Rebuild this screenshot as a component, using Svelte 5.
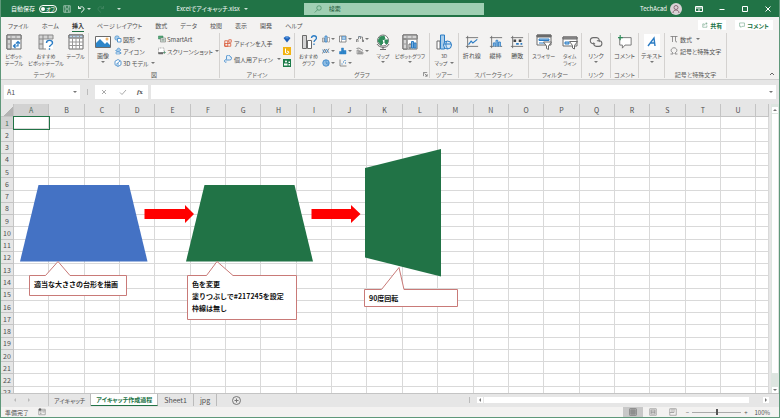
<script lang="ts">
    const menu = ["ファイル", "ホーム", "挿入", "ページ レイアウト", "数式", "データ", "校閲", "表示", "開発", "ヘルプ"];
    const columns = "ABCDEFGHIJKLMNOPQRSTU".split("");
    const rows = Array.from({ length: 23 }, (_, i) => i + 1);
    const sheets = ["アイキャッチ", "アイキャッチ作成過程", "Sheet1", "jpg"];
    const chartIcons = ["column", "tree", "waterfall", "line", "histogram", "combo", "pie", "scatter"];

    let activeMenu = $state("挿入");
    let activeSheet = $state("アイキャッチ作成過程");
    let autosave = $state(false);
    let zoom = $state(100);
</script>

{#snippet icon(name: string)}
    <svg class="icon" viewBox="0 0 16 16" fill="none" stroke="#6b6b6b" stroke-width="1" aria-hidden="true">
        {#if name == "pivot"}
            <path d="M1 1h14v14H1z" fill="#fff" /><path d="M1 1h14v4H1zM1 5h4v10H1z" fill="#d4d4d4" />
            <path d="M5 1v14M1 5h14M1 10h4M10 1v4" stroke="#999" />
            <path d="M7.500 12h4.500V7.500M9.500 10l-2 2 2 2M10 9.500l2-2 2 2" stroke="#2b7cc4" stroke-width="1.200" />
        {:else if name == "pivotHelp"}
            <path d="M1 1h14v14H1z" fill="#fff" stroke="none" /><path d="M1 1h14v4H1zM1 5h4v10H1z" fill="#d4d4d4" stroke="none" />
            <path d="M8 15H1V1h14v4M5 1v14M1 5h14M1 10h4M10 1v4" stroke="#888" />
            <path d="M8.500 9c0-3.500 6-3.500 6 0 0 2-3 2-3 4M11.500 14.300v1.500" stroke="#2b7cc4" stroke-width="1.400" />
        {:else if name == "table"}
            <path d="M1 1h14v14H1z" fill="#fff" /><path d="M1 1h14v3H1z" fill="#b9d5ec" />
            <path d="M1 4h14M1 8h14M1 11.500h14M4.500 1v14M8 1v14M11.500 1v14" stroke="#999" />
        {:else if name == "picture"}
            <path d="M.5 2.500h15v11H.5z" fill="#fff" />
            <path d="M1 9l4-4 5 5 2-2 3 3v2H1z" fill="#2e86c9" stroke="none" /><circle cx="12" cy="5" r="1.500" fill="#f0b46b" stroke="none" />
        {:else if name == "shapes"}
            <circle cx="6" cy="6" r="4.500" fill="#a9cdea" stroke="#2b7cc4" /><path d="M7 7h7v7H7z" fill="#fff" stroke="#2b7cc4" stroke-width="1.500" />
        {:else if name == "icons"}
            <path d="M6 6c0-5 6-5 6-1l2 1-2 1c0 3-6 3-9 0z" fill="#a9cdea" stroke="#2b7cc4" />
            <path d="M4 10h8v4H4zM12 11h2v2h-2" stroke="#2b7cc4" fill="#d7e8f6" />
        {:else if name == "model"}
            <path d="M8 1l6 3.500v7L8 15l-6-3.500v-7z" fill="#fff" stroke="#2b7cc4" stroke-width="1.500" /><path d="M4 11l8-7M8 8v6" stroke="#2b7cc4" stroke-width="1.500" />
        {:else if name == "smart"}
            <path d="M1 2h9v6H1z" fill="#56a979" stroke="#2f7d52" /><path d="M5 6h10v8H5z" fill="#d8eadf" /><path d="M7 9h6M7 11.500h6" />
        {:else if name == "screenshot"}
            <path d="M1 2h11v9H1z" fill="#fff" stroke-dasharray="2 1" /><path d="M1 11h9v3H1z" fill="#6b6b6b" /><path d="M13 8v6M10 11h6" stroke="#2f7d52" />
        {:else if name == "store"}
            <path d="M1.500 3.500h6v11h-6zM1.500 9h12v5.500h-12zM9.500 1.500h5v5h-5z" stroke="#d8502e" stroke-width="1.500" />
        {:else if name == "addin"}
            <path d="M5 9V4a3.500 3.500 0 017-1 3.500 3.500 0 01-1 7H5a2.500 2.500 0 100 4" fill="#e4eff9" stroke="#2b7cc4" stroke-width="1.500" />
        {:else if name == "visio"}
            <path d="M1 6l4-3h6l4 3-7 9z" fill="#1e5fb8" stroke="none" /><path d="M5 3h6v4H5z" fill="#4f95df" stroke="none" />
        {:else if name == "bing"}
            <path d="M0 0h16v16H0z" fill="#f2b312" stroke="none" /><path d="M5 3v9l5 1 2-3-4-2" stroke="#fff" stroke-width="2" />
        {:else if name == "people"}
            <path d="M0 0h16v16H0z" fill="#1c7b48" stroke="none" /><circle cx="6" cy="5" r="2" fill="#fff" stroke="none" /><path d="M2 9h7v4H2zM11 5h3v3h-3zM11 10h3v3h-3z" fill="#fff" stroke="none" />
        {:else if name == "chartHelp"}
            <path d="M1.500 1.500h4v13h-4z" fill="#d4d4d4" /><path d="M6.500 6.500h4v8h-4z" fill="#fff" />
            <path d="M10.500 4c0-3 5-3 5 0 0 2-2.500 2-2.500 4M13 9.500v1.500" stroke="#2b7cc4" stroke-width="1.300" />
        {:else if name == "column"}
            <path d="M1 6h4v8H1z" fill="#d4d4d4" /><path d="M6 2h4v12H6z" fill="#a9cdea" stroke="#2b7cc4" stroke-width="1.500" /><path d="M11 5h4v9h-4z" fill="#fff" />
        {:else if name == "tree"}
            <path d="M1 2h13v12H1z" fill="#fff" stroke-width="1.500" /><path d="M6 3h7v6H6z" fill="#a9cdea" stroke="#2b7cc4" /><path d="M5 2v12" />
        {:else if name == "waterfall"}
            <path d="M1 14V9h3v5M5 8V3h4v5M10 4h3v10M13 10h2v4" stroke-width="1.500" /><path d="M6 5l3-3" stroke="#2b7cc4" />
        {:else if name == "line"}
            <path d="M1 13l4-9 4 8 5-9" stroke-width="1.500" /><path d="M1 5l4 7 4-8 5 8" stroke="#2b7cc4" stroke-width="1.300" />
        {:else if name == "histogram"}
            <path d="M1 9h4v5H1zM5 2h4v12H5zM9 7h5v7H9z" fill="#2e86c9" stroke="#2b7cc4" />
        {:else if name == "combo"}
            <path d="M2 6h4v8H2zM6 8h4v6H6zM10 10h4v4h-4z" fill="#d4d4d4" /><path d="M1 3l5-1 8 5" stroke-width="1.500" />
        {:else if name == "pie"}
            <circle cx="8" cy="8" r="6.500" fill="#8fbde3" stroke="#2b7cc4" stroke-width="1.500" /><path d="M8 2v6l5 4M8 8h6" stroke="#2b7cc4" />
        {:else if name == "scatter"}
            <path d="M2 1v13h13" stroke-width="1.500" /><path d="M5 10h2M8 6h2M12 8h2M11 3h2" stroke="#2b7cc4" stroke-width="2" />
        {:else if name == "globe"}
            <circle cx="8" cy="6.500" r="5.500" fill="#fff" stroke="#777" /><path d="M5 3l4-1 1 3-3 1 1 3-2 2-3-4zM10 6h3l-1 4-2-1z" fill="#2f8c5a" stroke="#2f8c5a" />
            <path d="M2 10c2 4 10 5 12 0M8 13v2M5 15.500h6" />
        {:else if name == "pivotChart"}
            <path d="M1 1h14v14H1z" fill="#fff" /><path d="M1 1h14v4H1zM1 5h4v10H1z" fill="#d4d4d4" /><path d="M5 1v14M1 5h14M10 1v4M1 10h4" stroke="#999" />
            <path d="M7 10h2v4H7z" fill="#fff" /><path d="M9.500 7.500h2V14h-2zM12 9h2v5h-2z" fill="#7fb3e0" stroke="#2b7cc4" />
        {:else if name == "map3d"}
            <path d="M1 7h3v8H1z" fill="#fff" /><path d="M4.500 1h4v14h-4z" fill="#a9cdea" stroke="#2b7cc4" />
            <circle cx="11.500" cy="11" r="4" fill="#d7e8f6" stroke="#2b7cc4" /><path d="M8 10h7M11 7c-2 3-1 6 1 8" stroke="#2b7cc4" />
        {:else if name == "sparkLine"}
            <path d="M3 1v14M1 3h14M1 13h14" /><path d="M4 11l3-4 2 2 5-4" stroke="#2b7cc4" stroke-width="1.300" />
        {:else if name == "sparkColumn"}
            <path d="M3 1v14M1 3h14M1 13h14" /><path d="M5 13V9h2v4M8 13V6h2v7M11 13V8h2v5" fill="#a9cdea" stroke="#2b7cc4" />
        {:else if name == "sparkWin"}
            <path d="M3 1v14M1 3h14M1 13h14" /><path d="M4 5h3v3H4zM10 5h3v3h-3z" fill="#444" stroke="none" /><path d="M7 9h3v2H7zM12 9h2v2h-2z" fill="#2b7cc4" stroke="none" />
        {:else if name == "slicer"}
            <path d="M1 1h14v10H1z" fill="#fff" /><path d="M1 1h14v2H1z" fill="#6b6b6b" /><path d="M3 5h10v1.500H3z" fill="#a9cdea" stroke="#2b7cc4" /><path d="M3 9h5" stroke="#2b7cc4" />
            <path d="M7.500 8h8L12.500 12v3.500l-2-1V12z" fill="#fff" />
        {:else if name == "timeline"}
            <path d="M1 3h14v9H1z" fill="#fff" /><path d="M1 3h14v2H1z" fill="#9a9a9a" /><path d="M3 8h4v2H3z" fill="#a9cdea" stroke="#2b7cc4" />
            <path d="M7.500 7.500h8l-3 4V15l-2-1v-2.500z" fill="#fff" />
        {:else if name == "link"}
            <path d="M7 10H5a3.500 3.500 0 010-7h3.500a3.500 3.500 0 013 5M9 6.500h2.500a3.200 3.200 0 010 6.500H8.500a3.300 3.300 0 01-3-4.500" stroke-width="1.200" />
        {:else if name == "comment"}
            <path d="M2 3h13v8.500H8L5 15v-3.500H2z" fill="#fff" /><path d="M2.500 0v6M0 3h5.500" stroke="#2f8c5a" stroke-width="1.300" />
        {:else if name == "textbox"}
            <path d="M0 0h16v16H0z" fill="#fff" stroke="none" /><path d="M4 12l6-8 1 8M6 9h5" stroke="#2b7cc4" stroke-width="1.400" />
        {:else if name == "share"}
            <path d="M6 5H2v9h11V9M5 10c0-4 3-6 8-6M10 1l4 3-4 3" stroke="#217346" />
        {:else if name == "bubble"}
            <path d="M1.500 2.500h13v9H8l-3 3v-3H1.500z" stroke="#217346" />
        {:else if name == "save"}
            <path d="M1.500 1.500h13v13h-13zM4.500 1.500v5h7v-5M4.500 14.500v-5h7v5" stroke="#fff" />
        {:else if name == "undo"}
            <path d="M3 2v5h5M3 7c6-6 11-3 11 1 0 3-3 4-6 7" stroke="#fff" stroke-width="1.800" />
        {:else if name == "redo"}
            <path d="M13 2v5H8M13 7c-6-6-11-3-11 1 0 3 3 4 6 7" stroke="#3f8560" stroke-width="1.800" />
        {:else if name == "search"}
            <circle cx="10" cy="6" r="4.500" stroke="#217346" /><path d="M7 9.500L1.500 15" stroke="#217346" />
        {:else if name == "pi"}
            <path d="M1 3h14M5 3v11M11 3v9q0 2 3 2" stroke-width="1.400" />
        {:else if name == "omega"}
            <path d="M1 14h5v-2C-1 8 3 1.500 8 1.500S17 8 10 12v2h5" stroke-width="1.400" />
        {:else if name == "record"}
            <path d="M1.500 2.500h13v11h-13zM1.500 5.500h13M4 8h3M9 8h4M4 11h3" /><circle cx="4" cy="3" r="2" fill="#555" />
        {:else if name == "viewGrid"}
            <path d="M1.500 1.500h13v13h-13zM1.500 6h13M1.500 10h13M6 1.500v13M10 1.500v13" stroke="#444" />
        {:else if name == "viewPage"}
            <path d="M1.500 1.500h13v13h-13zM4 4h8v8H4zM4 6.500h8M4 9h8" />
        {:else if name == "viewBreak"}
            <path d="M1.500 1.500h13v13h-13zM1.500 9H6V1.500M10 1.500V9H6" />
        {/if}
    </svg>
{/snippet}

{#snippet big(name: string, lines: string[], drop: boolean)}
    <button class="big">
        {@render icon(name)}
        {#each lines as line, i}
            <span>{line}{#if drop && i == 1}<i class="caret inline"></i>{/if}</span>
        {/each}
        {#if drop && lines.length == 1}<i class="caret"></i>{/if}
    </button>
{/snippet}

{#snippet small(name: string, label: string, drop: boolean)}
    <button class="small">
        {@render icon(name)}
        <span>{label}</span>
        {#if drop}<i class="caret"></i>{/if}
    </button>
{/snippet}

<div class="window">
    <header class="titlebar">
        <div class="quick">
            <label class="autosave">自動保存 <input type="checkbox" bind:checked={autosave} /><span class="toggle">オフ</span></label>
            <button aria-label="上書き保存">{@render icon("save")}</button>
            <button aria-label="元に戻す">{@render icon("undo")}<i class="caret light"></i></button>
            <button aria-label="やり直し">{@render icon("redo")}</button>
            <button class="more" aria-label="カスタマイズ"><i class="caret light"></i></button>
            <span class="filename">Excelでアイキャッチ.xlsx <i class="caret light"></i></span>
        </div>
        <label class="search">{@render icon("search")}<input type="search" placeholder="検索" aria-label="検索" /></label>
        <div class="account">
            <span class="user">TechAcad</span>
            <svg class="avatar" viewBox="0 0 12 12" aria-hidden="true">
                <circle cx="6" cy="6" r="6" fill="#d9d2d6" /><circle cx="6" cy="4.500" r="2" fill="none" stroke="#8a6b78" /><path d="M3 10c0-4 6-4 6 0" fill="none" stroke="#8a6b78" />
            </svg>
            <button aria-label="リボンの表示オプション"><svg viewBox="0 0 8 8"><path d="M.5 1.500h7v5h-7zM.5 3h7M4 6V4" /></svg></button>
            <button aria-label="最小化"><svg viewBox="0 0 8 8"><path d="M1.500 4.500h5" /></svg></button>
            <button aria-label="最大化"><svg viewBox="0 0 8 8"><path d="M1.500 1.500h5v5h-5z" /></svg></button>
            <button aria-label="閉じる"><svg viewBox="0 0 8 8"><path d="M1.500 1.500l5 5M6.500 1.500l-5 5" /></svg></button>
        </div>
    </header>

    <nav class="menu">
        {#each menu as item}
            <button class:active={item == activeMenu} onclick={() => (activeMenu = item)}>{item}</button>
        {/each}
        <div class="actions">
            <button>{@render icon("share")}共有</button>
            <button>{@render icon("bubble")}コメント</button>
        </div>
    </nav>

    <div class="ribbon">
        <section class="g-table">
            <div class="tools">
                {@render big("pivot", ["ピボット", "テーブル"], false)}
                {@render big("pivotHelp", ["おすすめ", "ピボットテーブル"], false)}
                {@render big("table", ["テーブル"], false)}
            </div>
            <h2>テーブル</h2>
        </section>
        <section class="g-figure">
            <div class="tools">
                {@render big("picture", ["画像"], true)}
                <div class="stack">
                    {@render small("shapes", "図形", true)}
                    {@render small("icons", "アイコン", false)}
                    {@render small("model", "3D モデル", true)}
                </div>
                <div class="stack">
                    {@render small("smart", "SmartArt", false)}
                    {@render small("screenshot", "スクリーンショット", true)}
                </div>
            </div>
            <h2>図</h2>
        </section>
        <section class="g-addin">
            <div class="tools">
                <div class="stack tall">
                    {@render small("store", "アドインを入手", false)}
                    {@render small("addin", "個人用アドイン", true)}
                </div>
                <div class="stack">
                    {#each ["visio", "bing", "people"] as name}
                        <button class="small" aria-label={name}>{@render icon(name)}</button>
                    {/each}
                </div>
            </div>
            <h2>アドイン</h2>
        </section>
        <section class="g-chart">
            <div class="tools">
                {@render big("chartHelp", ["おすすめ", "グラフ"], false)}
                <div class="charts">
                    {#each chartIcons as name}
                        <button class="small" aria-label={name}>{@render icon(name)}<i class="caret"></i></button>
                    {/each}
                </div>
                {@render big("globe", ["マップ"], true)}
                {@render big("pivotChart", ["ピボットグラフ"], true)}
            </div>
            <h2>グラフ</h2>
            <svg class="launcher" viewBox="0 0 6 6" aria-hidden="true"><path d="M.5 5V.5H5M2 2l3 3M5 2.500V5H2.500" fill="none" stroke="#777" /></svg>
        </section>
        <section class="g-tour">
            <div class="tools">{@render big("map3d", ["3D", "マップ"], true)}</div>
            <h2>ツアー</h2>
        </section>
        <section class="g-spark">
            <div class="tools">
                {@render big("sparkLine", ["折れ線"], false)}
                {@render big("sparkColumn", ["縦棒"], false)}
                {@render big("sparkWin", ["勝敗"], false)}
            </div>
            <h2>スパークライン</h2>
        </section>
        <section class="g-filter">
            <div class="tools">
                {@render big("slicer", ["スライサー"], false)}
                {@render big("timeline", ["タイム", "ライン"], false)}
            </div>
            <h2>フィルター</h2>
        </section>
        <section class="g-link">
            <div class="tools">{@render big("link", ["リンク"], true)}</div>
            <h2>リンク</h2>
        </section>
        <section class="g-comment">
            <div class="tools">{@render big("comment", ["コメント"], false)}</div>
            <h2>コメント</h2>
        </section>
        <section class="g-text">
            <div class="tools">{@render big("textbox", ["テキスト"], true)}</div>
        </section>
        <section class="g-symbol">
            <div class="tools">
                <div class="stack">
                    {@render small("pi", "数式", true)}
                    {@render small("omega", "記号と特殊文字", false)}
                </div>
            </div>
            <h2>記号と特殊文字</h2>
        </section>
        <button class="collapse" aria-label="リボンを折りたたむ"><svg viewBox="0 0 6 6"><path d="M1 4l2-2 2 2" /></svg></button>
    </div>

    <div class="formula">
        <label class="namebox"><input value="A1" aria-label="名前ボックス" /><i class="caret"></i></label>
        <span class="grip"></span>
        <div class="fx">
            <button aria-label="キャンセル"><svg viewBox="0 0 8 8"><path d="M2 2l4 4M6 2L2 6" /></svg></button>
            <button aria-label="入力"><svg viewBox="0 0 8 8"><path d="M1 4.500l2 2L7 2" /></svg></button>
            <button class="fn"><em>f</em>x</button>
        </div>
        <label class="entry"><input aria-label="数式バー" /><i class="caret"></i></label>
    </div>

    <div class="work">
        <main class="sheet">
            <table>
                <thead>
                    <tr>
                        <th class="corner" aria-label="すべて選択"></th>
                        {#each columns as col}<th class:current={col == "A"}>{col}</th>{/each}
                        <th></th>
                    </tr>
                </thead>
                <tbody>
                    {#each rows as row}
                        <tr>
                            <th class:current={row == 1}>{row}</th>
                            {#each columns as col}<td class:selected={row == 1 && col == "A"}></td>{/each}
                            <td></td>
                        </tr>
                    {/each}
                </tbody>
            </table>

            <!-- drawing layer, in sheet coordinates -->
            <svg class="drawing" viewBox="0 0 470 230" aria-hidden="true">
                <path d="M36.500 81h90.500l18.500 76.500H18z" fill="#4472c4" />
                <path d="M202.500 81h90l18.500 76.500H184z" fill="#217346" />
                <path d="M363 64l76-19v127.500l-76-19z" fill="#217346" />
                <path d="M142.500 105H183v-4l9 9-9 9v-4h-40.500zM309.500 105H349v-4l9.500 9-9.500 9v-4h-39.500z" fill="#f00" />
                <g fill="#fff" stroke="#c97a78">
                    <path d="M27.500 171.500h16l12.500-14 12 14h56.500v20h-97z" />
                    <path d="M185.500 171.500h19l10.500-14 16 14h63.500v44h-109z" />
                    <path d="M362.500 185.500h17l17.500-22 5 22h53.500v17h-93z" />
                </g>
            </svg>
            <p class="note first">適当な大きさの台形を描画</p>
            <p class="note second">色を変更<br />塗りつぶしで#217245を設定<br />枠線は無し</p>
            <p class="note third">90度回転</p>
        </main>
        <div class="vscroll">
            <button aria-label="上へ"><i class="caret up"></i></button>
            <span class="thumb"></span>
            <button aria-label="下へ"><i class="caret"></i></button>
        </div>
    </div>

    <div class="tabs">
        <span class="arrows"><i class="caret left"></i><i class="caret right"></i></span>
        {#each sheets as name}
            <button
                class="tab"
                class:latin={/^\w+$/.test(name)}
                class:active={name == activeSheet}
                onclick={() => (activeSheet = name)}
            >{name}</button>
        {/each}
        <button class="add" aria-label="新しいシート"><svg viewBox="0 0 9 9"><circle cx="4.500" cy="4.500" r="4" /><path d="M4.500 2.500v4M2.500 4.500h4" /></svg></button>
        <span class="grip"></span>
        <div class="hscroll">
            <button aria-label="左へ"><i class="caret left"></i></button>
            <span class="thumb"></span>
            <button aria-label="右へ"><i class="caret right"></i></button>
        </div>
    </div>

    <footer class="status">
        <span>準備完了</span>
        {@render icon("record")}
        <div class="views">
            <button class="on" aria-label="標準">{@render icon("viewGrid")}</button>
            <button aria-label="ページ レイアウト">{@render icon("viewPage")}</button>
            <button aria-label="改ページ プレビュー">{@render icon("viewBreak")}</button>
        </div>
        <button aria-label="縮小" onclick={() => (zoom -= 10)}>−</button>
        <input type="range" min="10" max="190" bind:value={zoom} aria-label="ズーム" />
        <button aria-label="拡大" onclick={() => (zoom += 10)}>+</button>
        <span class="percent">{zoom}%</span>
    </footer>
</div>

<style>
    :global(body) {
        margin: 0;
    }

    .window {
        box-sizing: border-box;
        height: 100vh;
        display: flex;
        flex-direction: column;
        overflow: hidden;
        border: 1px solid #5f987a;
        border-top: 0;
        background: #e6e6e6;
        color: #505050;
        font: 6px/7px "Noto Sans CJK JP", sans-serif;
        font-feature-settings: "palt";
    }

    button,
    input {
        font: inherit;
        font-feature-settings: inherit;
        color: inherit;
        background: none;
        border: 0;
        padding: 0;
        margin: 0;
        min-width: 0;
        outline: 0;
    }

    button {
        display: flex;
        align-items: center;
        justify-content: center;
        white-space: nowrap;
    }

    svg {
        flex: none;
    }

    .icon {
        width: 8px;
        height: 8px;
    }

    .caret {
        flex: none;
        width: 0;
        height: 0;
        border: 2px solid transparent;
        border-top-color: #777;
        border-bottom: 0;
    }

    .caret.light {
        border-top-color: #cfe3d7;
    }

    .caret.up {
        transform: rotate(180deg);
    }

    .caret.left {
        transform: rotate(90deg);
    }

    .caret.right {
        transform: rotate(-90deg);
    }

    /* title bar */
    .titlebar {
        flex: none;
        height: 17px;
        display: grid;
        grid-template-columns: 303fr 180fr 295fr;
        align-items: center;
        background: #217346;
        color: #fff;
        margin: 0 -1px;
    }

    .quick {
        display: flex;
        align-items: center;
        gap: 6px;
        padding-left: 11px;
    }

    .quick button {
        gap: 2px;
    }

    .quick .more {
        margin-left: 6px;
    }

    .autosave {
        display: flex;
        align-items: center;
        gap: 4px;
    }

    .autosave input {
        position: absolute;
        opacity: 0;
    }

    .toggle {
        box-sizing: border-box;
        width: 18px;
        height: 8px;
        border: 1px solid #fff;
        border-radius: 4px;
        font-size: 5px;
        line-height: 6px;
        display: flex;
        align-items: center;
        gap: 1px;
    }

    .toggle::before {
        content: "";
        width: 4px;
        height: 4px;
        margin-left: 1px;
        border-radius: 50%;
        background: #fff;
    }

    .filename {
        margin-left: auto;
        margin-right: 56px;
        display: flex;
        align-items: center;
        gap: 4px;
        white-space: nowrap;
    }

    .search {
        height: 12px;
        background: #9fcfb3;
        display: flex;
        align-items: center;
        gap: 7px;
        padding-left: 10px;
        color: #1c5837;
    }

    .search input {
        flex: 1;
    }

    .search input::placeholder {
        color: #1c5837;
        opacity: 1;
    }

    .account {
        display: flex;
        align-items: center;
        justify-content: flex-end;
        padding-right: 1px;
    }

    .account button {
        width: 23px;
    }

    .account button svg {
        width: 8px;
        height: 8px;
        fill: none;
        stroke: #fff;
    }

    .avatar {
        width: 12px;
        height: 12px;
        margin: 0 5px 0 3px;
    }

    /* menu */
    .menu {
        flex: none;
        height: 16px;
        display: flex;
        align-items: center;
        gap: 13px;
        padding: 0 6px 0 7px;
        background: #f3f2f1;
    }

    .menu > button {
        height: 13px;
        box-sizing: border-box;
        border: 1px solid transparent;
        border-width: 1px 0;
    }

    .menu > button.active {
        font-weight: bold;
        color: #333;
        border-bottom-color: #217346;
    }

    .actions {
        margin-left: auto;
        display: flex;
        gap: 9px;
        font-weight: bold;
        color: #217346;
    }

    .actions button {
        height: 10px;
        padding: 0 4px;
        gap: 2px;
        background: #fff;
    }

    .actions .icon {
        width: 6px;
        height: 6px;
    }

    /* ribbon */
    .ribbon {
        flex: none;
        height: 46px;
        display: flex;
        background: #f3f2f1;
        border-bottom: 1px solid #cfcfcf;
    }

    section {
        box-sizing: border-box;
        flex: none;
        height: 45px;
        display: flex;
        flex-direction: column;
        justify-content: space-between;
        border-right: 1px solid #d4d2d0;
        position: relative;
    }

    h2 {
        margin: 0;
        font: inherit;
        text-align: center;
        color: #605e5c;
    }

    .tools {
        display: flex;
    }

    .g-table { width: 88px; }
    .g-figure { width: 131px; }
    .g-addin { width: 75px; }
    .g-chart { width: 135px; }
    .g-tour { width: 29px; }
    .g-spark { width: 70px; }
    .g-filter { width: 53px; }
    .g-link { width: 29px; }
    .g-comment { width: 28px; }
    .g-text { width: 26px; }
    .g-symbol { width: 62px; }

    .big {
        flex: 1 1 auto;
        flex-direction: column;
        justify-content: flex-start;
        padding-top: 1px;
    }

    .big .icon {
        width: 16px;
        height: 16px;
        margin-bottom: 2px;
    }

    .big .caret {
        margin-top: 2px;
    }

    .big .inline {
        display: inline-block;
        margin: 0 0 1px 2px;
    }

    .g-table .tools {
        display: grid;
        grid-template-columns: 26px 38px 21px;
    }

    .g-chart .tools {
        display: grid;
        grid-template-columns: 27px 51px 20px 34px;
    }

    .g-table .big,
    .g-chart .big,
    .g-tour .big,
    .g-filter .big {
        font-size: 5px;
    }

    .g-spark .icon,
    .g-comment .icon,
    .g-link .icon {
        width: 14px;
        height: 14px;
        margin: 1px 0 3px;
    }

    .stack {
        flex: 1 1 auto;
        display: flex;
        flex-direction: column;
    }

    .small {
        height: 12px;
        justify-content: flex-start;
        gap: 2px;
    }

    .small .caret {
        margin-left: 2px;
    }

    .tall .small {
        height: 16px;
    }

    .tall {
        padding: 2px 0 0 4px;
    }

    .g-figure .tools {
        display: grid;
        grid-template-columns: 22px 44px 1fr;
        padding-left: 3px;
    }

    .g-figure .small {
        gap: 1px;
    }

    .g-figure .small .caret {
        margin-left: 1px;
    }

    .g-symbol .tools {
        padding-left: 5px;
    }

    .charts {
        display: grid;
        grid-template-columns: repeat(3, 17px);
        align-content: start;
    }

    .charts .small {
        gap: 1px;
    }

    .charts .caret {
        margin: 0;
    }

    .launcher {
        position: absolute;
        right: 1px;
        bottom: 1px;
        width: 5px;
        height: 5px;
    }

    .collapse {
        margin: auto 4px 2px auto;
    }

    .collapse svg {
        width: 6px;
        height: 6px;
        fill: none;
        stroke: #666;
    }

    /* formula bar */
    .formula {
        flex: none;
        height: 14px;
        display: flex;
        padding: 5px 3px 5px 3px;
    }

    .namebox,
    .entry {
        display: flex;
        align-items: center;
        background: #fff;
        padding: 0 3px;
    }

    .namebox {
        width: 70px;
        font-size: 7px;
    }

    .namebox input,
    .entry input {
        flex: 1;
    }

    .grip {
        width: 1px;
        height: 6px;
        margin: auto 7px;
        background: #bbb;
    }

    .fx {
        width: 53px;
        display: flex;
        justify-content: space-around;
        background: #fff;
        margin-right: 3px;
    }

    .fx svg {
        width: 8px;
        height: 8px;
        fill: none;
        stroke: #aaa;
    }

    .fn {
        font: bold 7px/8px "Liberation Serif", serif;
    }

    .entry {
        flex: 1;
    }

    /* sheet */
    .work {
        flex: 1;
        min-height: 0;
        display: flex;
    }

    .sheet {
        flex: 1;
        min-width: 0;
        position: relative;
        overflow: hidden;
    }

    table {
        display: grid;
        grid-template-rows: 13px 282px;
        font-size: 7px;
        line-height: 8px;
        margin-right: 2px;
    }

    thead {
        display: grid;
    }

    tbody {
        display: grid;
        grid-template-rows: repeat(23, 1fr);
        background: #fff;
    }

    tr {
        display: grid;
        grid-template-columns: 13px repeat(21, 353fr) 127fr;
    }

    th,
    td {
        padding: 0;
        box-sizing: border-box;
        border: 0 solid #d9d9d9;
        border-width: 0 1px 1px 0;
        min-width: 0;
    }

    th {
        font-weight: normal;
        display: flex;
        align-items: center;
        justify-content: center;
        background: #e6e6e6;
        border-color: #c4c4c4;
    }

    th.current {
        background: #d2d2d2;
        color: #4b6b59;
    }

    .corner {
        background: linear-gradient(135deg, #e6e6e6 60%, #b4b4b4 60%);
    }

    .selected {
        outline: 1px solid #217346;
        z-index: 1;
    }

    .drawing {
        position: absolute;
        left: 1px;
        top: 0;
        width: 470px;
        height: 230px;
    }

    .note {
        position: absolute;
        margin: 0;
        font-size: 7px;
        line-height: 12px;
        font-weight: bold;
        font-feature-settings: normal;
        color: #111;
        white-space: nowrap;
    }

    .first {
        left: 33px;
        top: 174px;
    }

    .second {
        left: 191px;
        top: 174px;
    }

    .third {
        left: 368px;
        top: 188px;
    }

    .vscroll {
        width: 8px;
        background: #dde5e0;
        display: flex;
        flex-direction: column;
        padding: 3px 1px 0;
        box-sizing: border-box;
    }

    .vscroll button,
    .hscroll button {
        width: 6px;
        height: 6px;
        background: #fff;
    }

    .vscroll .thumb {
        flex: 1;
        margin: 1px 0 14px;
        background: #fff;
    }

    /* sheet tabs */
    .tabs {
        flex: none;
        height: 14px;
        display: flex;
        box-sizing: border-box;
        border-top: 1px solid #c4c4c4;
        padding-bottom: 1px;
    }

    .arrows {
        width: 48px;
        box-sizing: border-box;
        padding-left: 12px;
        display: flex;
        align-items: center;
        gap: 10px;
        opacity: 0.4;
        border-right: 1px solid #999;
    }

    .tab {
        padding: 0 5px;
        border-right: 1px solid #bbb;
    }

    .tab.latin {
        padding: 0 6px;
        font-size: 7px;
    }

    .tab.active {
        background: #fff;
        color: #217346;
        font-weight: bold;
        border-bottom: 1px solid #217346;
    }

    .add {
        margin: 0 auto 0 15px;
    }

    .add svg {
        width: 9px;
        height: 9px;
        fill: none;
        stroke: #777;
    }

    .hscroll {
        width: 292px;
        margin-right: 10px;
        display: flex;
        align-items: center;
    }

    .hscroll .thumb {
        flex: 1;
        height: 6px;
        margin: 0 14px 0 1px;
        background: #fff;
    }

    /* status bar */
    .status {
        flex: none;
        height: 10px;
        display: flex;
        align-items: center;
        gap: 3px;
        padding: 0 9px 0 4px;
        background: #f3f2f1;
    }

    .status > .icon {
        margin-left: 6px;
    }

    .views {
        margin-left: auto;
        display: flex;
    }

    .views button {
        width: 20px;
        height: 10px;
    }

    .views .on {
        background: #c8c8c8;
    }

    .status input {
        appearance: none;
        width: 49px;
        height: 8px;
        background: linear-gradient(#aaa, #aaa) center / 100% 1px no-repeat;
    }

    .status input::-webkit-slider-thumb {
        appearance: none;
        width: 2px;
        height: 6px;
        background: #555;
    }

    .percent {
        margin-left: 4px;
    }
</style>
